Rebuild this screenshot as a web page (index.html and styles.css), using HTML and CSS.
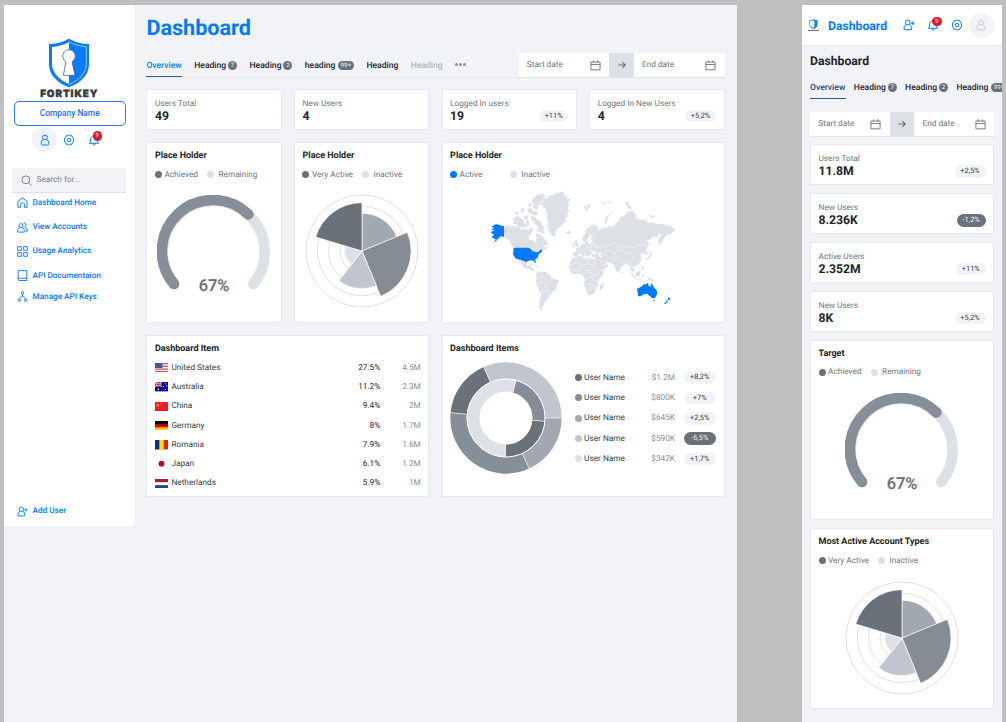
FILE: index.html
```html
<!DOCTYPE html>
<html lang="en">
<head>
<meta charset="utf-8">
<title>Fortikey Dashboard</title>
<link rel="stylesheet" href="styles.css">
</head>
<body>
<svg class="defs" width="0" height="0">
  <symbol id="shield" viewBox="0 0 126 150">
    <path d="M63 2 C44 13 24 17 3 18 V80 C4 112 28 134 63 148 C98 134 122 112 123 80 V18 C102 17 82 13 63 2Z" fill="#0a7bff"/>
    <path d="M63 13 C45 22 28 26 12 27 V80 C14 106 34 125 63 138Z" fill="#fff"/>
    <path d="M63 11 C80 21 98 25 115 26 V80 C113 108 93 126 63 140" fill="none" stroke="#d5e8ff" stroke-width="2"/>
    <path d="M54 71 A19 19 0 1 1 72 71 L81 112 H46Z" fill="#fff" stroke="#53606e" stroke-width="2.4"/>
  </symbol>
  <symbol id="user" viewBox="0 0 24 24"><circle cx="12" cy="7" r="4.800"/><path d="M9 11 C6 12.500 4.500 15 4.500 18.500 C4.500 21.500 5.500 22 7 22 H17 C18.500 22 19.500 21.500 19.500 18.500 C19.500 15 18 12.500 15 11"/></symbol>
  <symbol id="userplus" viewBox="0 0 24 24"><circle cx="9.500" cy="7" r="4.800"/><path d="M6.500 11 C3 13 2 16 2 21.500 H17 C17 16 16 13 12.500 11 M19.500 5 v7 M16 8.500 h7"/></symbol>
  <symbol id="gear" viewBox="0 0 24 24"><circle cx="12" cy="12" r="3.500"/><path d="M12 1.500 L14.500 3.600 L17.800 3.300 L18.500 6.500 L21.500 8.500 L20.500 12 L21.500 15.500 L18.500 17.500 L17.800 20.700 L14.500 20.400 L12 22.500 L9.500 20.400 L6.200 20.700 L5.500 17.500 L2.500 15.500 L3.500 12 L2.500 8.500 L5.500 6.500 L6.200 3.300 L9.500 3.600Z"/></symbol>
  <symbol id="bell" viewBox="0 0 24 24"><path d="M2.500 18.500 C5.500 16 5 13 5.500 9.500 C6 5.500 8.500 3.500 12 3.500 C15.500 3.500 18 5.500 18.500 9.500 C19 13 18.500 16 21.500 18.500Z M9 19 C9.500 23 14.500 23 15 19"/></symbol>
  <symbol id="search" viewBox="0 0 24 24"><circle cx="10.500" cy="10.500" r="8.500"/><path d="M17 17 L23 23"/></symbol>
  <symbol id="home" viewBox="0 0 24 24"><path d="M2 9.500 L12 2 L22 9.500 V22.500 H16.500 V16 C16.500 11.500 7.500 11.500 7.500 16 V22.500 H2Z"/></symbol>
  <symbol id="users" viewBox="0 0 24 24"><circle cx="8.500" cy="8" r="4.500"/><path d="M6 12 C2.500 13.500 1.500 17 1.500 22 H16 C16 17 15 13.500 11 12 M14 2.500 C20 .5 22 8 17 11 C21.500 13 22.500 17 22.500 20 H19"/></symbol>
  <symbol id="grid" viewBox="0 0 24 24"><path d="M1.500 1.500 H9.500 V9.500 H1.500Z M14.500 1.500 H22.500 V9.500 H14.500Z M1.500 14.500 H9.500 V22.500 H1.500Z M14.500 14.500 H22.500 V22.500 H14.500Z"/></symbol>
  <symbol id="book" viewBox="0 0 24 24"><path d="M2.500 1.500 H21.500 V23 H4.500 C3 23 2.500 22 2.500 20.500Z M2.500 18 H21.500"/></symbol>
  <symbol id="nodes" viewBox="0 0 24 24"><circle cx="12" cy="4" r="2.600"/><circle cx="5" cy="20" r="2.600"/><circle cx="19" cy="20" r="2.600"/><path d="M12 7 V12 M6 17 C6 13.500 9 12.500 12 12 C15 12.500 18 13.500 18 17"/></symbol>
  <symbol id="calendar" viewBox="0 0 24 24"><path d="M2 4.500 H22 V21.500 H2Z M2 10 H22 M7.500 1 V5 M16.500 1 V5"/></symbol>
  <symbol id="arrow" viewBox="0 0 24 24"><path d="M3 12 H20 M13 5 L20 12 L13 19"/></symbol>

  <symbol id="gauge" viewBox="-170 -170 340 290">
    <g fill="none" stroke-width="32" stroke-linecap="round">
      <path d="M-119 97 A153 153 0 1 1 119 97" stroke="#dde1e6"/>
      <path d="M-119 97 A153 153 0 0 1 104 -112" stroke="#868e98"/>
    </g>
  </symbol>
  <symbol id="polar" viewBox="-171 -171 342 342">
    <g fill="none" stroke="#d9dadb" stroke-width="2.500"><circle r="168"/><circle r="134"/><circle r="100"/><circle r="66"/></g>
    <g stroke="#fff" stroke-width="2">
      <path d="M0 0 V-113 A113 113 0 0 1 104.500 -43Z" fill="#a1a8b1"/>
      <path d="M0 0 L136 -56 A147 147 0 0 1 56 136Z" fill="#868c96"/>
      <path d="M0 0 L43 104.500 A113 113 0 0 1 -69.500 89Z" fill="#c1c6ce"/>
      <path d="M0 0 L-32 41 A52 52 0 0 1 -50 -15Z" fill="#dde1e6"/>
      <path d="M0 0 L-139 -42 A145 145 0 0 1 0 -145Z" fill="#6a7179"/>
    </g>
  </symbol>
</svg>

<div class="desktop">
  <aside class="sidebar">
    <svg class="logo"><use href="#shield"/></svg>
    <div class="brand">FORTIKEY</div>
    <button class="company">Company Name</button>
    <div class="quick">
      <span class="avatar"><svg class="ic i12"><use href="#user"/></svg></span>
      <svg class="ic i12"><use href="#gear"/></svg>
      <span class="bell"><svg class="ic i12"><use href="#bell"/></svg><b>9</b></span>
    </div>
    <div class="search"><svg class="ic i11"><use href="#search"/></svg>Search for...</div>
    <nav class="nav">
      <a><svg class="ic i11"><use href="#home"/></svg>Dashboard Home</a>
      <a><svg class="ic i11"><use href="#users"/></svg>View Accounts</a>
      <a><svg class="ic i11"><use href="#grid"/></svg>Usage Analytics</a>
      <a><svg class="ic i11"><use href="#book"/></svg>API Documentaion</a>
      <a class="near"><svg class="ic i11"><use href="#nodes"/></svg>Manage API Keys</a>
      <a class="add"><svg class="ic i11"><use href="#userplus"/></svg>Add User</a>
    </nav>
  </aside>

  <main class="main">
    <h1 class="title">Dashboard</h1>
    <div class="bar">
      <div class="tabs">
        <span class="tab w36 on">Overview</span>
        <span class="tab w43">Heading<i>7</i></span>
        <span class="tab w43">Heading<i>2</i></span>
        <span class="tab w49">heading<i class="wide">99+</i></span>
        <span class="tab w32">Heading</span>
        <span class="tab w32 off">Heading</span>
        <span class="dots"><u></u><u></u><u></u></span>
      </div>
      <div class="dates">
        <span class="date">Start date<svg class="ic i11"><use href="#calendar"/></svg></span>
        <span class="arrow"><svg class="ic i11"><use href="#arrow"/></svg></span>
        <span class="date">End date<svg class="ic i11"><use href="#calendar"/></svg></span>
      </div>
    </div>

    <div class="cards">
      <section class="card stat"><p>Users Total</p><div><strong>49</strong></div></section>
      <section class="card stat"><p>New Users</p><div><strong>4</strong></div></section>
      <section class="card stat"><p>Logged In users</p><div><strong>19</strong><em class="pill">+11%</em></div></section>
      <section class="card stat"><p>Logged In New Users</p><div><strong>4</strong><em class="pill">+5,2%</em></div></section>

      <section class="card chart">
        <h2>Place Holder</h2>
        <div class="legend"><span class="c1">Achieved</span><span class="c5">Remaining</span></div>
        <svg class="gauge"><use href="#gauge"/></svg>
        <div class="percent">67%</div>
      </section>
      <section class="card chart">
        <h2>Place Holder</h2>
        <div class="legend"><span class="c1">Very Active</span><span class="c5">Inactive</span></div>
        <svg class="polar"><use href="#polar"/></svg>
      </section>
      <section class="card chart span2">
        <h2>Place Holder</h2>
        <div class="legend far"><span class="blue">Active</span><span class="c5">Inactive</span></div>
        <svg class="map" viewBox="150 155 600 372">
          <g fill="#dde1e6" stroke="#dde1e6" stroke-width="1" stroke-linejoin="round">
            <path d="M204 268 L212 265 L222 269 L232 266 L240 270 L250 270 L256 277 L268 275 L275 279 L283 273 L288 270 L291 280 L286 288 L279 293 L277 302 L283 308 L293 310 L297 318 L301 316 L300 307 L304 302 L300 294 L302 289 L311 290 L315 298 L320 296 L327 307 L333 313 L337 321 L329 325 L319 325 L326 330 L334 330 L330 336 L322 339 L318 334 L308 342 L296 342 L288 336 L278 332 H235 L228 326 L224 315 L218 307 L211 301 L204 300Z"/>
            <path d="M246 366 L262 371 L270 376 L272 386 L279 386 L282 382 L286 382 L285 390 L292 393 L294 401 L285 398 L275 393 L265 391 L259 382 L255 377 L253 372Z"/>
            <path d="M302 408 L309 402 L318 405 L327 403 L336 409 L343 415 L347 423 L355 426 L366 428 L369 433 L365 440 L361 446 L359 458 L350 462 L345 471 L339 477 L337 485 L329 486 L328 493 L322 497 L323 503 L318 507 L319 516 L312 514 L309 506 L312 492 L313 478 L316 466 L308 456 L304 446 L299 436 L302 425Z"/>
            <path d="M314 196 L323 194 L320 186 L333 184 L340 175 L352 174 L358 167 L370 166 L376 163 L387 168 L379 174 L392 175 L390 183 L404 186 L396 193 L399 202 L394 213 L400 222 L393 229 L396 238 L386 241 L391 250 L379 260 L375 267 L365 273 L360 279 L358 290 L354 299 L347 294 L342 286 L337 275 L335 264 L338 256 L333 247 L335 234 L330 222 L331 213 L323 209Z"/>
            <path d="M300 176 L309 171 L318 170 L328 177 L322 183 L319 191 L310 193 L314 200 L304 207 L306 214 L297 215 L291 209 L294 201 L287 195 L290 186Z M275 199 L284 196 L288 203 L281 208Z M275 215 L286 212 L291 222 L301 221 L306 230 L297 234 L283 229 L276 225Z M253 216 L263 212 L265 222 L257 226Z M238 225 L246 222 L248 230 L238 232Z M230 244 L243 237 L254 242 L262 250 L264 259 L273 264 L262 271 L250 267 L240 269 L244 261 L231 259 L235 251Z M262 238 L274 235 L276 245 L268 248Z M269 252 L278 250 L281 263 L274 269Z M287 237 L300 241 L308 249 L315 254 L317 263 L324 269 L321 278 L328 285 L318 288 L307 282 L299 280 L307 273 L303 265 L297 261 L295 251 L285 248Z"/>
            <path d="M390 285 L400 281 L405 286 L397 291Z M442 207 L447 204 L450 211 L455 202 L465 202 L461 211 L456 212 L452 222 L448 214Z M498 199 L510 194 L505 199 L498 202Z M514 194 L526 191 L524 195 L517 196Z M568 193 L577 196 L580 205 L588 212 L581 217 L573 207Z M506 255 L510 239 L519 232 L531 226 L519 236 L513 245 L513 259Z M638 234 L652 235 L660 238 L648 242Z M414 317 L420 308 L425 316 L428 327 L415 329 L419 323Z M409 321 L413 318 L412 326 L408 327Z"/>
            <path d="M440 311 L439 300 L448 290 L451 278 L462 267 L474 262 L485 267 L488 275 L484 282 L493 278 L499 271 L511 273 L520 266 L531 270 L538 260 L551 249 L553 239 L565 235 L579 222 L589 221 L599 232 L600 242 L612 248 L631 248 L634 257 L653 256 L665 260 L682 261 L691 265 L704 266 L719 280 L708 284 L704 291 L694 290 L686 298 L677 315 L672 324 L667 313 L669 301 L680 292 L670 289 L662 298 L650 298 L643 306 L631 307 L639 321 L632 334 L629 340 L635 348 L631 354 L626 346 L615 348 L610 352 L616 359 L613 374 L606 382 L596 386 L592 384 L589 390 L597 399 L594 405 L585 399 L583 389 L577 383 L569 379 L560 386 L553 391 L550 401 L544 405 L538 395 L534 380 L523 376 L514 374 L505 370 L512 379 L517 384 L509 394 L491 399 L482 380 L478 370 L480 363 L471 358 L466 353 L458 352 L457 360 L451 352 L443 345 L447 355 L439 358 L434 347 L427 350 L424 357 L413 357 L413 344 L423 341 L419 333 L429 332 L438 321 L447 321 L446 310 L453 312 L458 321 L470 317 L471 310 L464 306 L469 295 L463 292 L455 304 L450 311Z"/>
            <path d="M411 362 L422 359 L438 357 L440 364 L451 365 L459 363 L477 366 L481 377 L488 390 L493 400 L504 402 L499 414 L489 424 L486 434 L487 444 L480 452 L477 463 L468 471 L458 474 L452 465 L449 453 L444 442 L447 430 L445 420 L438 410 L423 409 L411 410 L402 401 L399 390 L402 376Z M494 443 L502 435 L501 447 L496 459 L491 455Z"/>
            <path d="M629 367 L638 361 L643 349 L638 339 L646 344 L646 355 L640 365Z M582 404 L596 416 L601 425 L593 420Z M600 406 L611 400 L613 411 L606 419 L600 415Z M615 381 L620 388 L625 401 L616 393Z M618 414 L624 411 L623 420Z M600 424 L618 427 L613 429Z M632 419 L647 424 L655 432 L640 429Z M558 403 L561 408 L558 409Z M269 395 L278 398 M283 378 L298 383 L311 391 L301 387Z M318 516 L324 521"/>
          </g>
          <g fill="#fff">
            <path d="M487 346 L495 345 L493 352 L499 360 L492 360 L489 352Z M465 347 L472 344 L478 343 L484 348 L474 350 L466 351Z"/>
          </g>
          <g fill="none" stroke="#f5f6f8" stroke-width="1.700" stroke-linejoin="round">
            <path d="M403 386 L420 375 L420 362 M420 375 L438 385 L436 399 L447 409 M438 385 L457 378 L457 364 M457 378 L475 385 M475 365 L475 391 L465 400 L446 400 M404 396 L420 395 L421 409 M428 391 L430 407 M447 409 L463 404 L476 412 L489 411 M464 404 L465 421 L446 425 M465 421 L475 431 L487 430 M446 441 L463 439 L462 457 L452 460 M463 439 L477 446 L470 456 L462 455 M475 431 L476 447 M480 396 L488 410 M476 412 L472 425"/>
            <path d="M495 339 L503 321 L520 324 L536 316 L548 323 L558 334 L573 327 L592 332 L607 322 L624 321 L634 334 M548 337 L560 341 L575 350 L596 342 L605 333 M548 337 L536 346 L519 339 L505 337 M536 346 L541 358 L532 366 L518 360 L508 350 M541 358 L553 370 L567 373 L573 382 M533 367 L524 376 M493 359 L487 348 L498 346 L508 350 M488 371 L504 368 M497 394 L503 382 L514 382 M583 377 L588 389 M573 375 L580 385"/>
            <path d="M454 321 L453 329 L445 333 L439 327 M453 329 L466 328 L470 318 M466 328 L463 341 L450 339 L445 333 L436 345 M463 341 L472 342 L483 333 L475 326 L470 318 M472 342 L475 349 L493 350 M475 281 L474 302 M464 273 L458 292 M476 320 L494 333 M425 345 L435 348"/>
            <path d="M313 405 L318 418 L308 424 M318 418 L330 416 L335 410 M318 418 L315 433 L303 438 M315 433 L327 443 L333 454 L345 467 M317 448 L320 462 L318 484 M320 462 L331 460 L341 472"/>
          </g>
          <g fill="#007bff">
            <path d="M166 269 L174 263 L181 260 L191 264 L204 266 V300 L196 296 L191 299 L187 305 L182 304 L183 309 L174 315 L179 306 L170 302 L168 296 L175 292 L165 286 L167 282 L177 281 L165 276 L175 272Z"/>
            <path d="M233 331 H278 L285 336 L290 340 L290 347 L293 340 L299 345 L306 344 L313 338 L319 336 L317 344 L308 351 L306 358 L301 364 L297 368 L300 376 L297 377 L293 370 L282 369 L278 371 L273 371 L271 376 L265 371 L258 370 L254 367 L241 365 L235 358 L231 351Z"/>
            <path d="M603 455 L612 450 L618 447 L623 441 L630 441 L635 437 L638 440 L636 444 L643 448 L647 436 L650 444 L654 450 L660 457 L664 464 L662 474 L656 482 L648 483 L643 477 L638 474 L634 469 L623 471 L615 476 L606 477 L605 466Z M651 487 L657 488 L654 492Z M698 480 L704 484 L698 489 L694 486Z M693 489 L696 491 L688 500 L684 499Z"/>
          </g>
        </svg>
      </section>

      <section class="card span2 lower">
        <h2>Dashboard Item</h2>
        <div class="rows">
          <div class="row"><svg class="flag" viewBox="0 0 39 28"><rect width="39" height="28" fill="#f7e8ea"/><path d="M0 2H39M0 10H39M0 18H39M0 26H39" stroke="#ce5b68" stroke-width="3.600"/><rect width="22" height="15" fill="#46598a"/></svg><span>United States</span><b>27.5%</b><s>4.5M</s></div>
          <div class="row"><svg class="flag" viewBox="0 0 39 28"><rect width="39" height="28" fill="#08088c"/><path d="M0 0L20 14M20 0L0 14" stroke="#fff" stroke-width="3"/><path d="M10 0V14M0 7H20" stroke="#fff" stroke-width="5"/><path d="M10 0V14M0 7H20" stroke="#e31c3d" stroke-width="3"/><path d="M8 20h4v4h-4zM29 4h3v3h-3zM29 21h3v3h-3zM24 12h3v3h-3zM34 10h3v3h-3z" fill="#fff"/></svg><span>Australia</span><b>11.2%</b><s>2.3M</s></div>
          <div class="row"><svg class="flag" viewBox="0 0 39 28"><rect width="39" height="28" fill="#ee1c25"/><path d="M8 4l1.500 4h4l-3 2.500 1 4L8 12l-3.500 2.500 1-4-3-2.500h4zM15 2h2v2h-2zM18 6h2v2h-2zM18 10h2v2h-2z" fill="#ffb700"/></svg><span>China</span><b>9.4%</b><s>2M</s></div>
          <div class="row"><svg class="flag" viewBox="0 0 39 28"><rect width="39" height="28" fill="#ffce00"/><rect width="39" height="19" fill="#d00"/><rect width="39" height="9.500" fill="#000"/></svg><span>Germany</span><b>8%</b><s>1.7M</s></div>
          <div class="row"><svg class="flag" viewBox="0 0 39 28"><rect width="39" height="28" fill="#de2110"/><rect width="26" height="28" fill="#ffde00"/><rect width="13" height="28" fill="#00319c"/></svg><span>Romania</span><b>7.9%</b><s>1.6M</s></div>
          <div class="row"><svg class="flag" viewBox="0 0 39 28"><circle cx="19.500" cy="14" r="8.600" fill="#bc002d"/></svg><span>Japan</span><b>6.1%</b><s>1.2M</s></div>
          <div class="row"><svg class="flag" viewBox="0 0 39 28"><rect width="39" height="28" fill="#fff"/><rect width="39" height="9.500" fill="#ae1c28"/><rect y="18.500" width="39" height="9.500" fill="#21468b"/></svg><span>Netherlands</span><b>5.9%</b><s>1M</s></div>
        </div>
      </section>
      <section class="card span2 lower">
        <h2>Dashboard Items</h2>
        <div class="split">
          <svg class="donut" viewBox="-168 -168 336 336">
            <g fill="none" stroke-width="49">
              <path d="M-57.100 -130.500 A142.500 142.500 0 0 1 142.500 0" stroke="#c1c6ce"/>
              <path d="M142.500 0 A142.500 142.500 0 0 1 59.300 129.500" stroke="#a1a8b1"/>
              <path d="M59.300 129.500 A142.500 142.500 0 0 1 -141.800 -13.600" stroke="#868e97"/>
              <path d="M-141.800 -13.600 A142.500 142.500 0 0 1 -57.100 -130.500" stroke="#6a7179"/>
            </g>
            <g fill="none" stroke-width="37">
              <path d="M25.100 -94.700 A98 98 0 0 1 97.600 8.500" stroke="#868c96"/>
              <path d="M97.600 8.500 A98 98 0 0 1 -1.700 98" stroke="#6a7179"/>
              <path d="M-1.700 98 A98 98 0 1 1 25.100 -94.700" stroke="#dde1e6"/>
            </g>
            <path d="M-47 -108 L-67 -153 M118 0 H168 M49 107 L70 152 M-117 -11 L-167 -16 M20.500 -77 L30 -113 M79 7 L116 10 M-1.400 79 L-2 116" stroke="#fff" stroke-width="2"/>
            <circle r="117" fill="none" stroke="#fff" stroke-width="2.500"/>
          </svg>
          <div class="people">
            <div class="person"><span class="c1">User Name</span><s>$1.2M</s><em class="pill">+8,2%</em></div>
            <div class="person"><span class="c2">User Name</span><s>$800K</s><em class="pill">+7%</em></div>
            <div class="person"><span class="c3">User Name</span><s>$645K</s><em class="pill">+2,5%</em></div>
            <div class="person"><span class="c4">User Name</span><s>$590K</s><em class="pill dark">-6,5%</em></div>
            <div class="person"><span class="c5">User Name</span><s>$342K</s><em class="pill">+1,7%</em></div>
          </div>
        </div>
      </section>
    </div>
  </main>
</div>

<div class="mobile">
  <header class="top">
    <div class="minilogo"><svg><use href="#shield"/></svg><hr></div>
    <span class="name">Dashboard</span>
    <svg class="ic i12"><use href="#userplus"/></svg>
    <span class="bell"><svg class="ic i12"><use href="#bell"/></svg><b>9</b></span>
    <svg class="ic i12"><use href="#gear"/></svg>
    <span class="avatar pale"><svg class="ic i12"><use href="#user"/></svg></span>
  </header>
  <div class="content">
    <h1 class="subtitle">Dashboard</h1>
    <div class="tabs mtabs">
      <span class="tab w36 on">Overview</span>
      <span class="tab w43">Heading<i>7</i></span>
      <span class="tab w43">Heading<i>2</i></span>
      <span class="tab w51">Heading<i class="wide">99+</i></span>
    </div>
    <div class="dates mdates">
      <span class="date">Start date<svg class="ic i11"><use href="#calendar"/></svg></span>
      <span class="arrow"><svg class="ic i11"><use href="#arrow"/></svg></span>
      <span class="date">End date<svg class="ic i11"><use href="#calendar"/></svg></span>
    </div>
    <div class="stack">
      <section class="card stat"><p>Users Total</p><div><strong>11.8M</strong><em class="pill">+2,5%</em></div></section>
      <section class="card stat"><p>New Users</p><div><strong>8.236K</strong><em class="pill dark">-1,2%</em></div></section>
      <section class="card stat"><p>Active Users</p><div><strong>2.352M</strong><em class="pill">+11%</em></div></section>
      <section class="card stat"><p>New Users</p><div><strong>8K</strong><em class="pill">+5,2%</em></div></section>
      <section class="card chart">
        <h2>Target</h2>
        <div class="legend"><span class="c1">Achieved</span><span class="c5">Remaining</span></div>
        <svg class="gauge"><use href="#gauge"/></svg>
        <div class="percent">67%</div>
      </section>
      <section class="card chart">
        <h2>Most Active Account Types</h2>
        <div class="legend"><span class="c1">Very Active</span><span class="c5">Inactive</span></div>
        <svg class="polar"><use href="#polar"/></svg>
      </section>
    </div>
  </div>
</div>
</body>
</html>
```
FILE: styles.css
```css
* { box-sizing: border-box; margin: 0; padding: 0; }
body {
  width: 1006px; height: 722px; overflow: hidden;
  display: flex; gap: 65px; padding: 5px 4px 0 4px;
  background: #bfbfbf; color: #212529;
  font: 8.25px/12px Roboto, "Liberation Sans", sans-serif;
  text-rendering: geometricPrecision;
  white-space: nowrap;
}
svg { display: block; flex: none; }
.defs { position: absolute; }
s, u, i, em { text-decoration: none; font-style: normal; }
.ic { fill: none; stroke: currentColor; stroke-width: 2; }
.i12 { width: 12px; height: 12px; }
.i11 { width: 11px; height: 11px; }

.desktop { width: 733px; height: 717px; flex: none; display: flex; align-items: flex-start; background: #f2f3f7; }
.sidebar { width: 129.500px; height: 521px; flex: none; background: #fff; display: flex; flex-direction: column; color: #007bff; }
.logo { width: 42px; height: 50px; margin: 33px 0 0 44px; }
.brand { font: 900 9.900px/12px Inter, sans-serif; color: #343a40; -webkit-text-stroke: .4px #343a40; text-align: center; height: 13px; letter-spacing: .9px; padding-left: 1px; }
.company { margin: 0 8px 0 10px; height: 25px; border: 1px solid #2a75f5; border-radius: 5px; background: #fff; color: #1a73f0; font: 500 8.400px/1 Roboto, sans-serif; }
.quick { display: flex; align-items: center; padding-left: 28px; gap: 6px; height: 27px; }
.quick > .bell { margin-left: 6.500px; }
.avatar { width: 25px; height: 25px; border-radius: 50%; background: #f2f3f7; display: flex; align-items: center; justify-content: center; }
.avatar.pale { color: #c5c9ce; }
.bell { position: relative; width: 12px; height: 12px; }
.bell b { position: absolute; left: 5px; top: -2.500px; width: 9.600px; height: 9.600px; border-radius: 50%; background: #dc1c2e; color: #f8c9cd; font: 500 6px/9.600px Roboto, sans-serif; text-align: center; }
.search { margin: 15px 8px 0 8px; height: 25px; background: #f2f3f7; border-bottom: 1px solid #dde1e6; display: flex; align-items: center; gap: 5px; padding-left: 8.500px; color: #7c838a; }
.search .ic { color: #6a7179; }
.nav { display: flex; flex-direction: column; padding-left: 12.500px; font-weight: 500; font-size: 8.200px; }
.nav a { display: flex; align-items: center; gap: 5px; height: 24.400px; }
.nav a:first-child { margin-top: -2.500px; }
.nav .near { margin-top: -3.400px; }
.nav .add { margin-top: 190px; }

.main { flex: 1; padding: 0 12.500px 0 12.900px; }
.title { font-size: 21.600px; font-weight: 700; line-height: 48px; height: 48px; color: #007bff; }
.bar { display: flex; height: 24.500px; }
.tabs { flex: 1; display: flex; gap: 12.300px; border-bottom: 1px solid #e9ebef; font-weight: 500; font-size: 8.600px; height: 24.500px; }
.tab { display: flex; align-items: center; justify-content: space-between; flex: none; height: 24px; padding-top: 1px; }
.tab i { min-width: 9.200px; height: 9.200px; border-radius: 5px; background: #6a7179; color: #dfe1e4; font: 500 6.200px/9.400px Roboto, sans-serif; text-align: center; }
.tab i.wide { width: 16.500px; }
.w36 { width: 35.500px; } .w43 { width: 43px; } .w49 { width: 49.300px; } .w51 { width: 50.800px; } .w32 { width: 32px; }
.tab.on { color: #007bff; border-bottom: 1.500px solid #3b5998; padding-top: 2px; }
.tab.off { color: #adb3ba; }
.dots { display: flex; align-items: center; gap: .6px; }
.dots u { width: 3.200px; height: 3.200px; border-radius: 50%; background: #8b9197; }
.dates { display: flex; width: 206px; height: 24.500px; border-bottom: 1px solid #dee1e6; color: #6c757d; }
.date { flex: 1; background: #fff; display: flex; align-items: center; justify-content: space-between; padding: .8px 8.500px 0 8.300px; }
.date .ic, .arrow .ic { color: #6a7179; }
.arrow { width: 24.300px; background: #dde1e6; display: flex; align-items: center; justify-content: center; }
.arrow .ic { width: 10px; height: 10px; stroke-width: 2.600; }

.cards { margin-top: 11.500px; display: grid; grid-template-columns: repeat(4, 1fr); grid-template-rows: 41px 181px 162px; gap: 12px 12.300px; }
.card { background: #fff; border: 1px solid #e6e9ed; padding: 0 7.500px; }
.span2 { grid-column: span 2; }
.stat p { color: #6c757d; margin-top: 7.600px; line-height: 12px; }
.stat div { display: flex; align-items: center; justify-content: space-between; height: 13px; }
.stat strong { font-size: 12.200px; font-weight: 700; line-height: 13px; }
.pill { height: 12.500px; border-radius: 7px; padding: 0 5.800px; background: #f2f3f7; color: #343a40; font-size: 7.400px; line-height: 12.800px; text-align: center; }
.pill.dark { background: #6a7179; color: #f2f3f7; }
h2 { font-size: 9px; font-weight: 700; line-height: 12px; margin-top: 7px; color: #212529; }
.chart { display: flex; flex-direction: column; }
.legend { display: flex; gap: 9px; color: #6c757d; line-height: 12px; margin-top: 6.600px; }
.legend.far { gap: 27.500px; }
.legend span, .person span { display: flex; align-items: center; gap: 2.500px; }
.legend span + span { gap: 4.500px; }
.legend span::before, .person span::before { content: ""; width: 7px; height: 7px; border-radius: 50%; background: var(--dot); flex: none; }
.c1 { --dot: #6a7179; } .c2 { --dot: #868e97; } .c3 { --dot: #a1a8b1; } .c4 { --dot: #c1c6ce; } .c5 { --dot: #dde1e6; } .blue { --dot: #007bff; }
.gauge { width: 113.300px; height: 96.700px; margin: 14.200px auto 0; }
.percent { margin-top: -13.500px; font-size: 16.400px; font-weight: 500; line-height: 18px; color: #6a7179; text-align: center; -webkit-text-stroke: .2px #6a7179; }
.polar { width: 114px; height: 114px; margin: 13.700px auto 0; }
.map { width: 200px; height: 124px; margin: 8.800px 0 0 36px; }
.rows { margin-top: 3px; color: #343a40; }
.row { display: grid; grid-template-columns: 13px 1fr auto 40.500px; align-items: center; height: 19.300px; column-gap: 0; }
.row span { padding-left: 3.500px; }
.row b { font-weight: 400; color: #212529; }
.row s { color: #868e96; text-align: right; }
.flag { width: 13px; height: 9.400px; }
.split { display: flex; margin-top: 6.500px; align-items: flex-start; }
.donut { width: 112px; height: 112px; }
.people { flex: 1; margin: 5.900px 0 0 12.500px; }
.person { display: grid; grid-template-columns: 1fr auto 32.500px; column-gap: 8.500px; align-items: center; height: 20.350px; color: #343a40; }
.person s { color: #868e96; }
.person .pill { padding: 0; }

.mobile { width: 200px; height: 717px; flex: none; overflow: hidden; background: #f2f3f7; }
.top { height: 41px; background: #fff; border-bottom: 1px solid #e6e9ed; display: flex; align-items: center; padding-left: 6px; color: #007bff; }
.minilogo { width: 11px; }
.minilogo svg { width: 9px; height: 10.500px; margin: 0 auto; }
.minilogo hr { border: 0; height: 1px; background: #6b7077; }
.name { width: 70px; margin: 1px 5px 0 9px; font-size: 12.200px; font-weight: 700; }
.top .bell { margin: 0 12px; }
.top .avatar { margin-left: 5.500px; }
.content { padding: 0 8px; }
.subtitle { font-size: 12.200px; line-height: 30px; font-weight: 700; height: 29px; }
.mtabs { gap: 8.300px; border: 0; width: 192px; }
.mtabs .on { color: #2b418f; }
.mdates { width: 184px; margin-top: 12.500px; }
.stack { display: grid; grid-template-rows: repeat(4, 40.900px) 180.500px 180.500px; row-gap: 8px; margin-top: 7.800px; }
```
